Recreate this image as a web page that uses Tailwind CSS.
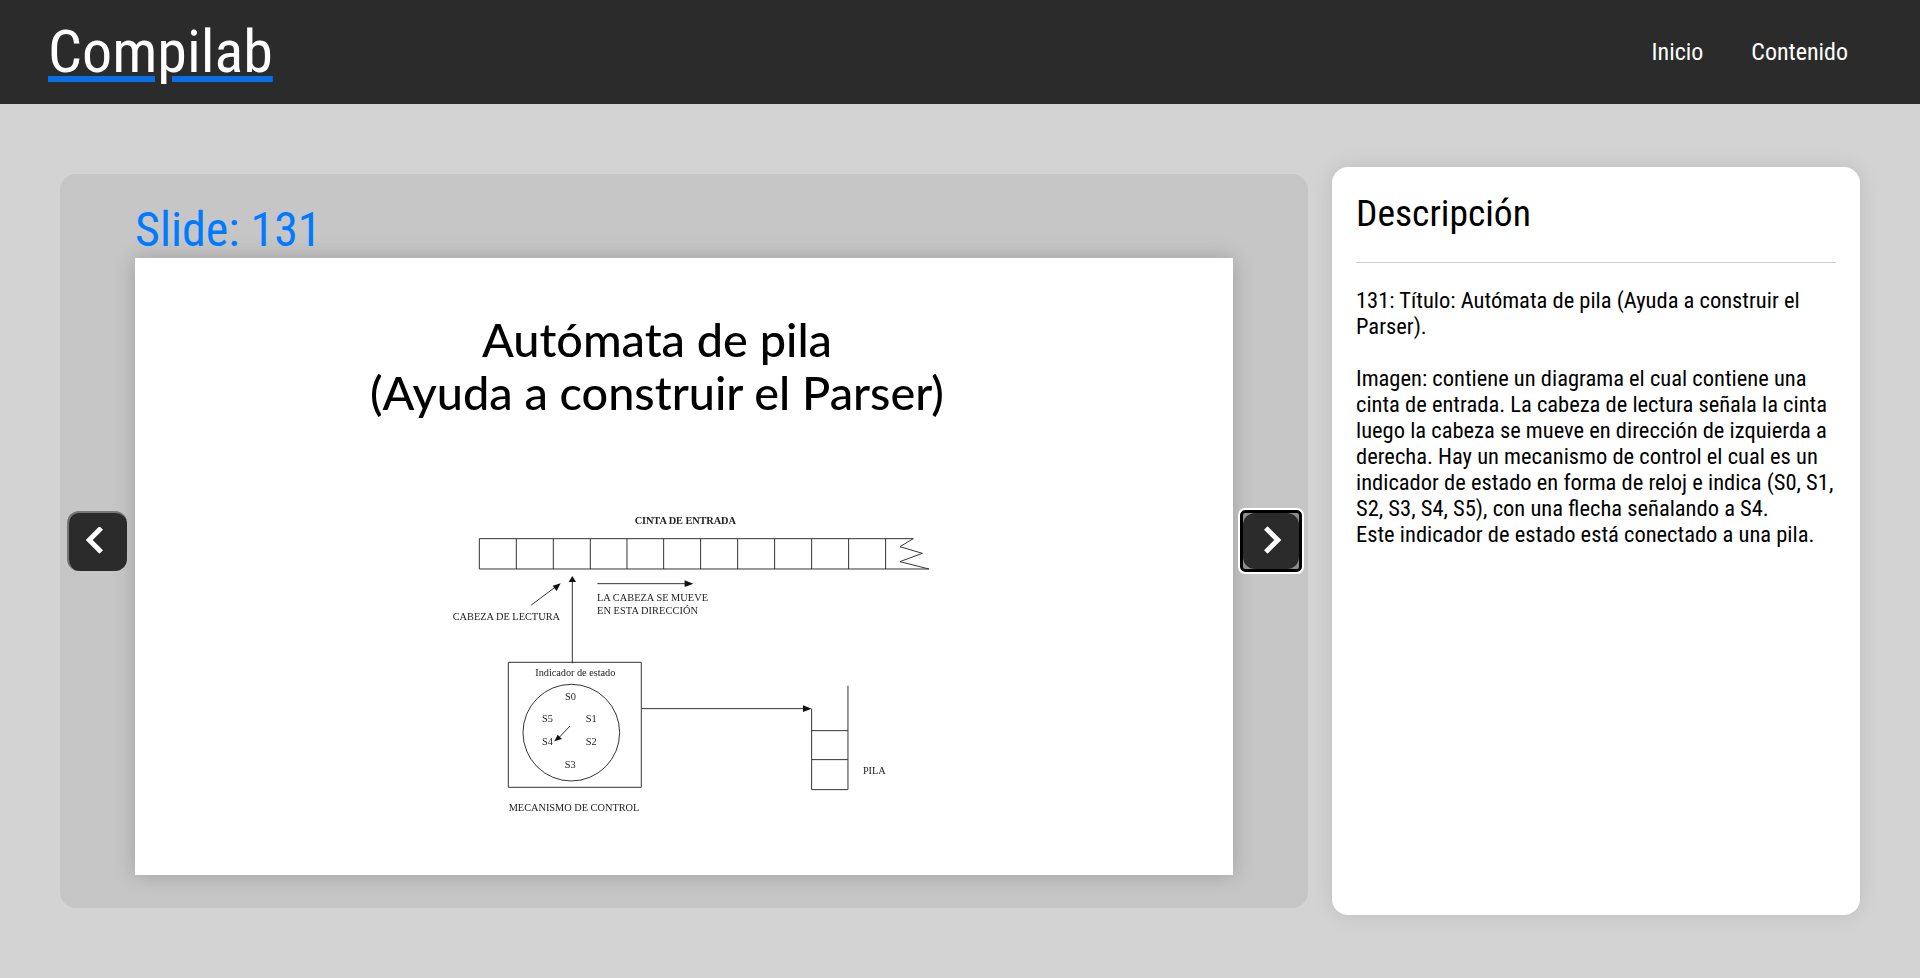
<!DOCTYPE html>
<html lang="es">

<head>
    <meta charset="UTF-8">
    <meta name="viewport" content="width=device-width, initial-scale=1.0">
    <script src="https://cdn.jsdelivr.net/npm/@tailwindcss/browser@4"></script>
    <title>Compilab</title>
</head>

<body class="bg-[#d3d3d3] font-['Roboto_Condensed',Roboto,sans-serif] [font-stretch:75%] overflow-hidden">
    <header class="h-[104px] bg-[#2b2b2b] flex items-center justify-between pl-[48px] pr-[72px]">
        <a href="#" class="text-[60px] leading-none text-white underline decoration-[#0a6ee6] decoration-[6px] underline-offset-[4px]">Compilab</a>
        <nav class="flex gap-[48px] text-[24px] text-white">
            <a href="#">Inicio</a>
            <a href="#">Contenido</a>
        </nav>
    </header>

    <main class="h-[874px] flex items-center gap-[24px] px-[60px]">
        <section class="relative w-[1248px] h-[734px] shrink-0 bg-[#c6c6c6] rounded-2xl px-[75px] pt-[26px]">
            <h2 class="h-[58px] text-[48px] leading-[60px] text-[#007bff]">Slide: 131</h2>
            <div class="w-[1098px] h-[617px] bg-white shadow-[0_0_20px_rgba(0,0,0,0.2)]">
                <svg class="block blur-[0.3px]" width="1098" height="617" viewBox="0 0 1098 617">
                    <g font-family="Lato, sans-serif" font-size="46.8" font-weight="500" fill="#000" text-anchor="middle">
                        <text x="522" y="99">Autómata de pila</text>
                        <text x="522" y="152">(Ayuda a construir el Parser)</text>
                    </g>
                    <g transform="translate(295 232) scale(0.3333)" fill="none" stroke="#333" stroke-width="3">
                        <path d="M148 146H1450M148 237H1497M148 146V237M259 146V237M370 146V237M481 146V237M591 146V237M701 146V237M812 146V237M923 146V237M1034 146V237M1145 146V237M1256 146V237M1367 146V237" />
                        <path d="M1450 146L1410 170L1477 190L1410 215L1497 237" />
                        <path d="M304 345L375 292M427 520V275M502 281H770M636 656H1125" />
                        <path d="M235 517H634V892H235Z" />
                        <circle cx="424" cy="728" r="145" />
                        <path d="M420 708L385 745" />
                        <path d="M1254 587V899H1145V656M1145 722H1254M1145 809H1254" />
                        <g fill="#111" stroke="none">
                            <path d="M392 280L368 287L380 303Z" />
                            <path d="M427 258L416 276H438Z" />
                            <path d="M790 281L764 271V291Z" />
                            <path d="M1145 656L1119 646V666Z" />
                            <path d="M373 754L383 734L396 747Z" />
                        </g>
                        <g fill="#222" stroke="none" font-family="Liberation Serif, serif" font-size="31">
                            <text x="614" y="101" font-weight="700" textLength="304">CINTA DE ENTRADA</text>
                            <text x="68" y="389" textLength="322">CABEZA DE LECTURA</text>
                            <text x="501" y="332" textLength="333">LA CABEZA SE MUEVE</text>
                            <text x="501" y="371" textLength="303">EN ESTA DIRECCIÓN</text>
                            <text x="316" y="558" textLength="240">Indicador de estado</text>
                            <text x="405" y="631">S0</text>
                            <text x="336" y="695">S5</text>
                            <text x="467" y="695">S1</text>
                            <text x="336" y="765">S4</text>
                            <text x="467" y="765">S2</text>
                            <text x="404" y="834">S3</text>
                            <text x="1299" y="852" textLength="68">PILA</text>
                            <text x="236" y="962" textLength="392">MECANISMO DE CONTROL</text>
                        </g>
                    </g>
                </svg>
            </div>

            <button class="absolute left-[7px] top-[337px] w-[60px] h-[60px] rounded-xl bg-[#2b2b2b] border-t-2 border-l-2 border-[#767676] flex items-center justify-center">
                <svg width="24" height="30" viewBox="0 0 24 30" fill="none" stroke="#fff" stroke-width="5">
                    <path d="M15.2 1L3.2 13L15.2 25" />
                </svg>
            </button>
            <button class="absolute right-[6px] top-[336px] w-[62px] h-[62px] rounded-[5px] bg-[#8d8d8d] border-[3px] border-black outline-2 outline-white flex items-center justify-center">
                <span class="w-full h-full rounded-xl bg-[#2b2b2b] flex items-center justify-center">
                    <svg width="24" height="30" viewBox="0 0 24 30" fill="none" stroke="#fff" stroke-width="5">
                        <path d="M6.8 2L18.8 14L6.8 26" />
                    </svg>
                </span>
            </button>
        </section>

        <aside class="w-[528px] h-[748px] shrink-0 bg-white rounded-2xl p-[24px] shadow-[0_0_20px_rgba(0,0,0,0.1)]">
            <h3 class="h-[71px] -mt-px mb-px text-[37.5px] leading-[46px] text-black">Descripción</h3>
            <hr class="border-[#cfcfcf]">
            <div class="mt-[24px] text-[22.5px] leading-[26px] text-black">
                131: Título: Autómata de pila (Ayuda a construir el Parser).<br><br>
                Imagen: contiene un diagrama el cual contiene una cinta de entrada. La cabeza de lectura señala la cinta luego la cabeza se mueve en dirección de izquierda a derecha. Hay un mecanismo de control el cual es un indicador de estado en forma de reloj e indica (S0, S1, S2, S3, S4, S5), con una flecha señalando a S4.<br>
                Este indicador de estado está conectado a una pila.
            </div>
        </aside>
    </main>
</body>

</html>
